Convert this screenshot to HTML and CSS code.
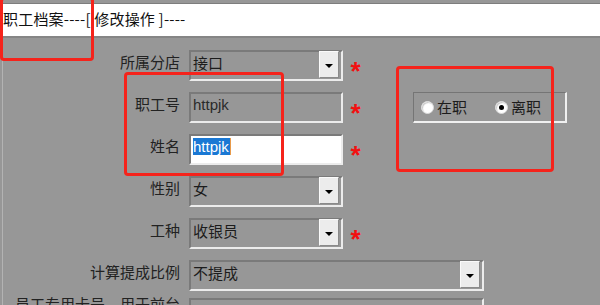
FILE: index.html
```
<!DOCTYPE html>
<html lang="zh-CN">

<head>
    <meta charset="UTF-8">
    <title>职工档案</title>
    <link rel="stylesheet" href="styles.css">
</head>

<body>
    <div class="top">
        <div class="title">职工档案----[ 修改操作 ]----</div>
    </div>

    <div class="panel">
        <div class="row">
            <div class="lbl">所属分店</div>
            <div class="sel"><span class="val">接口</span><span class="btn"><i></i></span></div>
            <span class="req">*</span>
        </div>

        <div class="row">
            <div class="lbl">职工号</div>
            <div class="inp readonly">httpjk</div>
            <span class="req">*</span>
            <div class="radios">
                <span class="radio"><b class="dot"></b>在职</span>
                <span class="radio on"><b class="dot"></b>离职</span>
            </div>
        </div>

        <div class="row">
            <div class="lbl">姓名</div>
            <div class="inp white"><span class="hl">httpjk</span></div>
            <span class="req">*</span>
        </div>

        <div class="row">
            <div class="lbl">性别</div>
            <div class="sel"><span class="val">女</span><span class="btn"><i></i></span></div>
        </div>

        <div class="row">
            <div class="lbl">工种</div>
            <div class="sel"><span class="val">收银员</span><span class="btn"><i></i></span></div>
            <span class="req">*</span>
        </div>

        <div class="row">
            <div class="lbl">计算提成比例</div>
            <div class="sel wide"><span class="val">不提成</span><span class="btn"><i></i></span></div>
        </div>

        <div class="row last">
            <div class="lbl">员工专用卡号，用于前台</div>
            <div class="inp readonly wide"></div>
        </div>
    </div>

    <!-- 标注框 -->
    <div class="mark mark-a"></div>
    <div class="mark mark-b"></div>
    <div class="mark mark-c"></div>
</body>

</html>
```

FILE: styles.css
```
* {
    margin: 0;
    padding: 0;
    box-sizing: border-box;
}

body {
    width: 600px;
    height: 305px;
    overflow: hidden;
    background: #979797;
    font-family: "Noto Sans CJK SC", "Liberation Sans", sans-serif;
    font-size: 15px;
    color: #1c1c1c;
}

.top {
    background: #fff;
    margin-top: 3px;
    border-top: 1px solid #7d7d7d;
    border-bottom: 2px solid #858585;
    height: 35px;
}

.title {
    padding-left: 3px;
    padding-top: 4px;
    line-height: 22px;
    color: #111;
    letter-spacing: 0.2px;
}

.panel {
    margin-left: 2px;
    border-left: 1px solid #b3b3b3;
    padding-top: 12px;
    height: 267px;
    overflow: hidden;
}

.row {
    display: flex;
    align-items: flex-start;
    height: 31px;
    margin-bottom: 11px;
}

.row.last {
    margin-top: -4px;
}

.lbl {
    width: 177px;
    text-align: right;
    padding-top: 2px;
    line-height: 20px;
    color: #222;
    white-space: nowrap;
}

.last .lbl {
    margin-top: -6px;
}

.sel,
.inp {
    margin-left: 9px;
    width: 154px;
    height: 31px;
    border-top: 2px solid #7a7a7a;
    border-left: 2px solid #7a7a7a;
    border-bottom: 2px solid #ececec;
    border-right: 2px solid #ececec;
}

.wide {
    width: 295px;
}

.sel {
    display: flex;
    background: #979797;
}

.sel .val {
    flex: 1;
    padding: 1px 0 0 2px;
    line-height: 20px;
}

.sel .btn {
    width: 20px;
    height: 27px;
    margin-top: -1px;
    margin-right: 2px;
    background: #ececec;
    border-top: 1px solid #fafafa;
    border-left: 1px solid #fafafa;
    border-bottom: 1px solid #8a8a8a;
    border-right: 1px solid #8a8a8a;
    display: flex;
    align-items: center;
    justify-content: center;
}

.sel .btn i {
    width: 0;
    height: 0;
    border-left: 4px solid transparent;
    border-right: 4px solid transparent;
    border-top: 4px solid #000;
    margin-top: 2px;
}

.inp {
    font-family: "Liberation Sans", sans-serif;
    padding: 1px 0 0 2px;
    line-height: 20px;
}

.readonly {
    background: #979797;
    color: #2a2a2a;
}

.white {
    background: #fff;
}

.hl {
    background: #1a78d4;
    color: #fff;
    border-right: 1px solid #e89a4a;
    padding-right: 1px;
}

.req {
    width: 21px;
    margin-left: 2px;
    text-align: center;
    color: #f21010;
    font-family: "Liberation Sans", sans-serif;
    font-weight: 700;
    font-size: 26px;
    line-height: 26px;
    padding-top: 8px;
}

.radios {
    margin-left: 47px;
    width: 154px;
    height: 31px;
    border-top: 1px solid #757575;
    border-left: 1px solid #757575;
    border-bottom: 2px solid #f0f0f0;
    border-right: 2px solid #f0f0f0;
    display: flex;
    align-items: center;
    padding-left: 7px;
    gap: 28px;
}

.radio {
    display: flex;
    align-items: center;
    gap: 3px;
    line-height: 20px;
    color: #1c1c1c;
}

.dot {
    width: 13px;
    height: 13px;
    border-radius: 50%;
    background: #fff;
    border: 1px solid #dcdcdc;
    box-shadow: inset 1px 1px 1px #c8c8c8;
    display: flex;
    align-items: center;
    justify-content: center;
}

.radio.on .dot::after {
    content: "";
    width: 5px;
    height: 5px;
    border-radius: 50%;
    background: #000;
}

.mark {
    position: absolute;
    border: 3px solid #f5231b;
    border-radius: 4px;
}

.mark-a {
    left: 0;
    top: -3px;
    width: 94px;
    height: 64px;
}

.mark-b {
    left: 124px;
    top: 72px;
    width: 160px;
    height: 104px;
}

.mark-c {
    left: 396px;
    top: 66px;
    width: 158px;
    height: 106px;
}
```
